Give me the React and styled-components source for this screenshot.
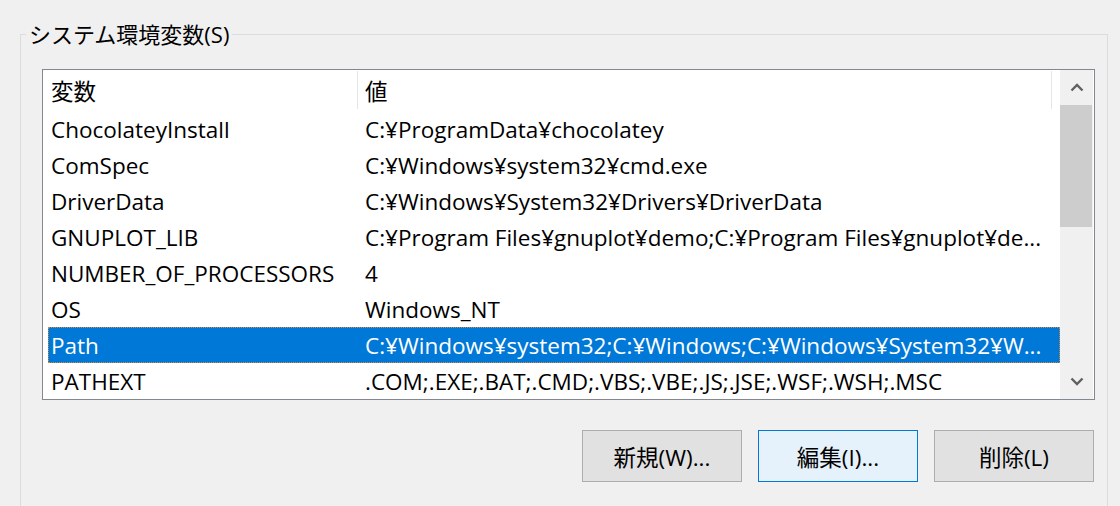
import React from 'react';
import styled, { createGlobalStyle } from 'styled-components';

const GlobalStyle = createGlobalStyle`
  html, body {
    margin: 0;
    padding: 0;
    background: #f0f0f0;
    overflow: hidden;
  }
  body {
    font-family: "Open Sans", "Noto Sans CJK JP", sans-serif;
    font-size: 22.5px;
    color: #000;
  }
`;

const variables = [
  { name: 'ChocolateyInstall', value: 'C:¥ProgramData¥chocolatey' },
  { name: 'ComSpec', value: 'C:¥Windows¥system32¥cmd.exe' },
  { name: 'DriverData', value: 'C:¥Windows¥System32¥Drivers¥DriverData' },
  { name: 'GNUPLOT_LIB', value: 'C:¥Program Files¥gnuplot¥demo;C:¥Program Files¥gnuplot¥de...' },
  { name: 'NUMBER_OF_PROCESSORS', value: '4' },
  { name: 'OS', value: 'Windows_NT' },
  { name: 'Path', value: 'C:¥Windows¥system32;C:¥Windows;C:¥Windows¥System32¥W...', selected: true },
  { name: 'PATHEXT', value: '.COM;.EXE;.BAT;.CMD;.VBS;.VBE;.JS;.JSE;.WSF;.WSH;.MSC' },
];

const Chevron = ({ up }) => (
  <svg width="14" height="9" viewBox="0 0 14 9">
    <path
      d={up ? 'M1.5 7.5 L7 2 L12.5 7.5' : 'M1.5 1.5 L7 7 L12.5 1.5'}
      fill="none"
      stroke="#606060"
      strokeWidth="2.4"
    />
  </svg>
);

const App = () => (
  <>
    <GlobalStyle />
    <Page>
      <GroupBox>
        <Legend>システム環境変数(S)</Legend>
        <GroupBody>
          <ListView>
            <Table>
              <HeaderRow>
                <HeaderCell $first>変数</HeaderCell>
                <HeaderCell>値</HeaderCell>
                <HeaderFiller />
              </HeaderRow>
              {variables.map(v => (
                <Row key={v.name} $selected={v.selected}>
                  <NameCell>{v.name}</NameCell>
                  <ValueCell>{v.value}</ValueCell>
                </Row>
              ))}
            </Table>
            <ScrollBar>
              <ArrowButton><Chevron up /></ArrowButton>
              <Track>
                <Thumb />
              </Track>
              <ArrowButton><Chevron /></ArrowButton>
            </ScrollBar>
          </ListView>
          <Actions>
            <Button>新規(W)...</Button>
            <Button $focused>編集(I)...</Button>
            <Button>削除(L)</Button>
          </Actions>
        </GroupBody>
      </GroupBox>
    </Page>
  </>
);

export default App;

const Page = styled.div`
  padding: 18px 12px 0 20px;
  height: 506px;
  box-sizing: border-box;
`;

const GroupBox = styled.fieldset`
  margin: 0;
  padding: 0 12px 80px 5px;
  border: 1px solid #dcdcdc;
`;

const Legend = styled.legend`
  padding: 0 3px;
  font-size: 22px;
  line-height: 32px;
  white-space: nowrap;
`;

const GroupBody = styled.div`
  padding: 19px 0 0 16px;
`;

const ListView = styled.div`
  display: flex;
  border: 1px solid #828790;
  background: #fff;
`;

const Table = styled.div`
  flex: 1;
  display: flex;
  flex-direction: column;
  min-width: 0;
`;

const HeaderRow = styled.div`
  display: flex;
  height: 41px;
  align-items: stretch;
`;

const HeaderCell = styled.div`
  width: ${props => (props.$first ? '315px' : '694px')};
  padding-left: ${props => (props.$first ? '8px' : '7px')};
  box-sizing: border-box;
  display: flex;
  align-items: center;
  padding-top: 1px;
  border-right: 1px solid #e5e5e5;
  margin: 1px 0 2px;
`;

const HeaderFiller = styled.div`
  flex: 1;
`;

const Row = styled.div`
  display: flex;
  height: 36px;
  align-items: center;
  margin-left: 5px;
  box-sizing: border-box;
  padding-top: 1px;
  background: ${props => (props.$selected ? '#0078d7' : 'transparent')};
  color: ${props => (props.$selected ? '#fff' : '#000')};
  outline: ${props => (props.$selected ? '1px dotted #d08a3a' : 'none')};
  outline-offset: -1px;
`;

const NameCell = styled.div`
  width: 310px;
  padding-left: 3px;
  box-sizing: border-box;
  white-space: nowrap;
  overflow: hidden;
`;

const ValueCell = styled.div`
  flex: 1;
  padding-left: 7px;
  white-space: nowrap;
  overflow: hidden;
`;

const ScrollBar = styled.div`
  width: 33px;
  display: flex;
  flex-direction: column;
  background: #f0f0f0;
  margin-right: 1px;
`;

const ArrowButton = styled.div`
  height: 35px;
  display: flex;
  align-items: center;
  justify-content: center;
`;

const Track = styled.div`
  flex: 1;
`;

const Thumb = styled.div`
  height: 122px;
  margin-right: 1px;
  background: #cdcdcd;
`;

const Actions = styled.div`
  display: flex;
  justify-content: flex-end;
  gap: 16px;
  margin-top: 30px;
  margin-right: 1px;
`;

const Button = styled.button`
  width: 160px;
  height: 52px;
  font: inherit;
  color: #000;
  background: ${props => (props.$focused ? '#e5f1fb' : '#e1e1e1')};
  border: 1px solid ${props => (props.$focused ? '#0078d7' : '#adadad')};
  padding: 0;
`;
